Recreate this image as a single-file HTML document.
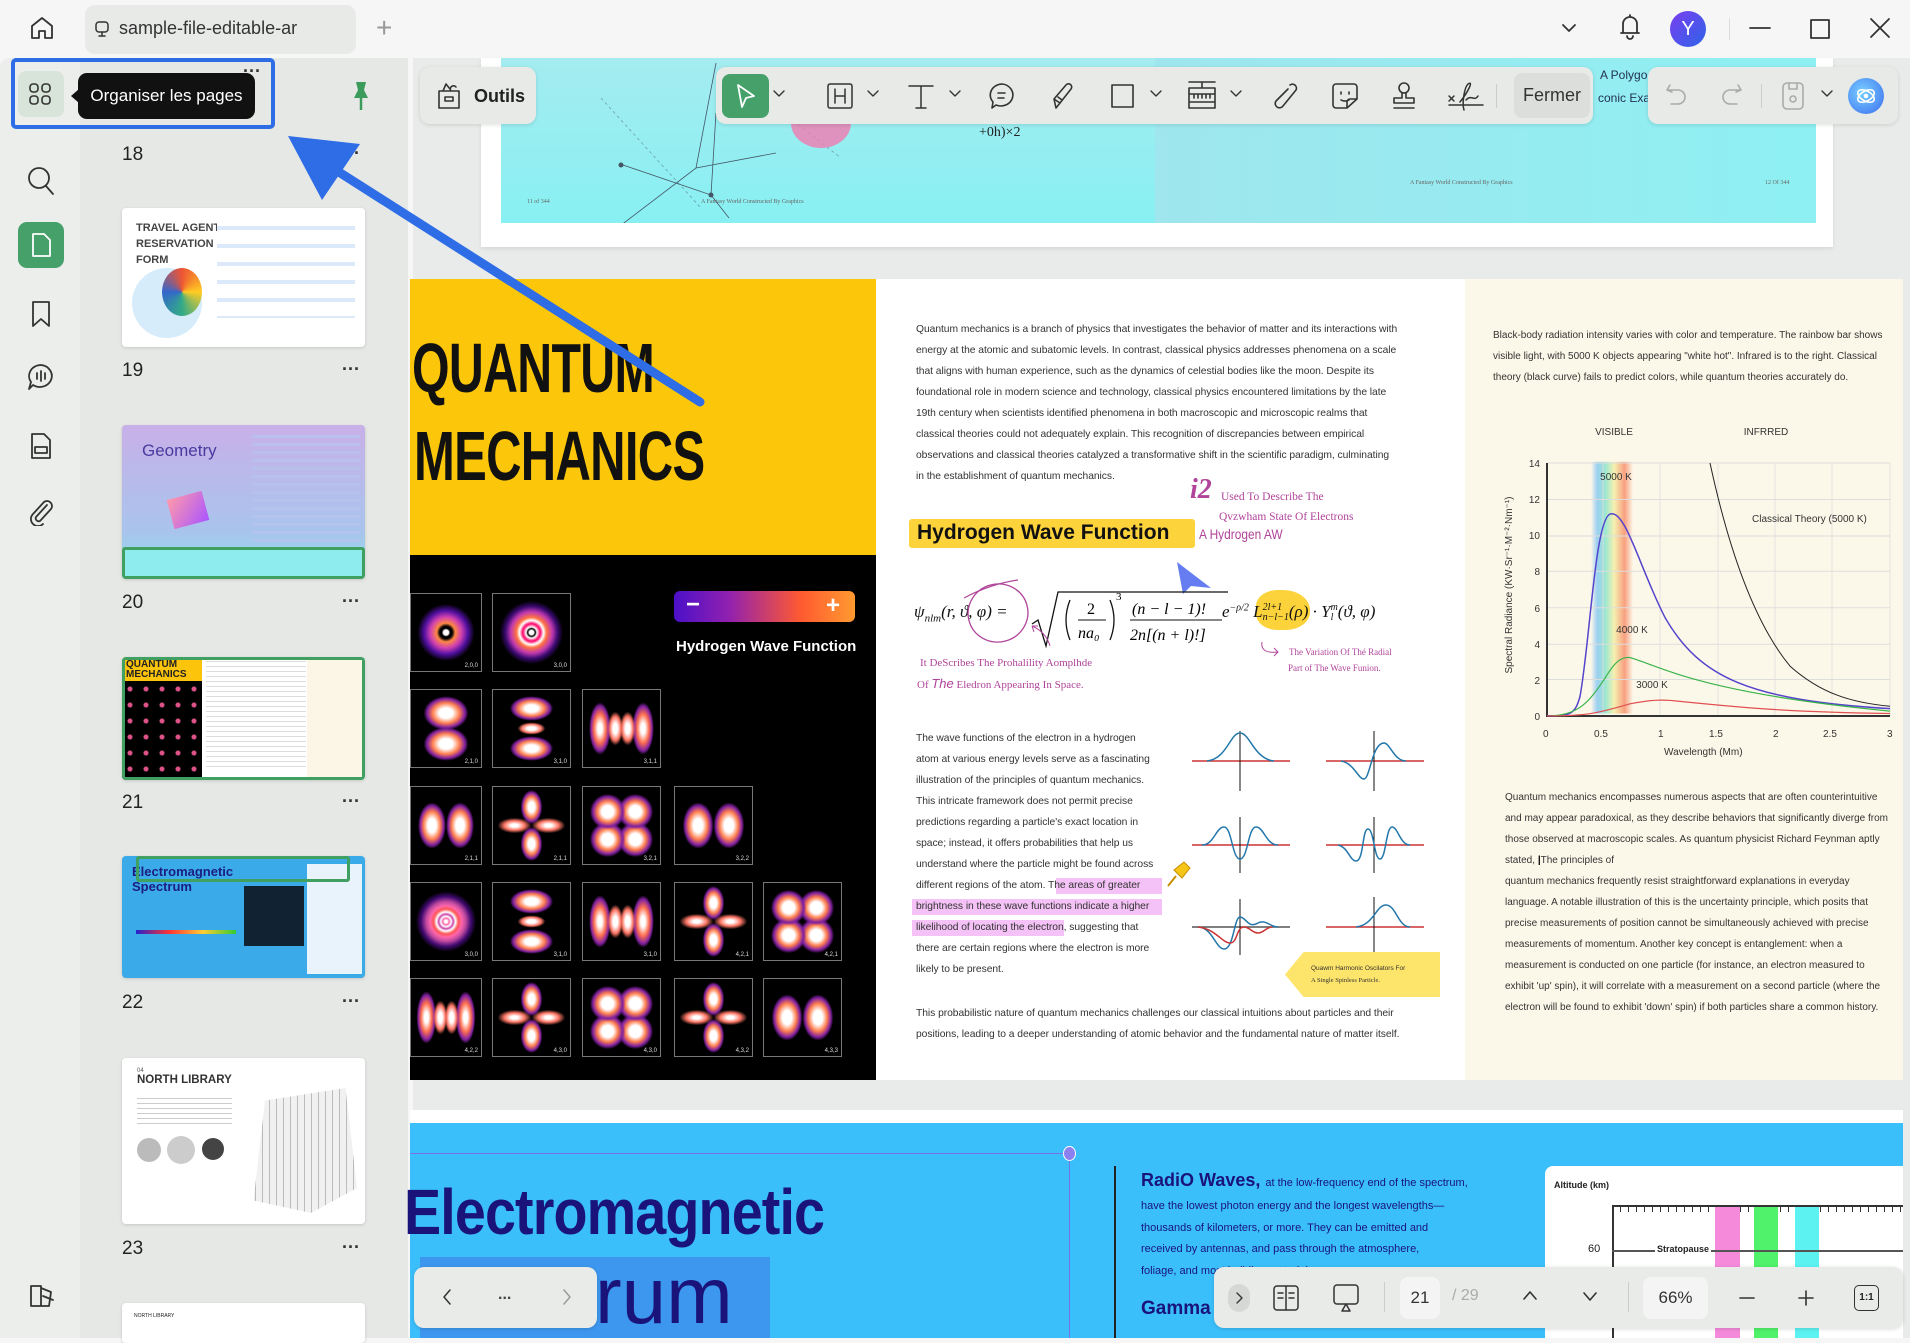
<!DOCTYPE html>
<html><head><meta charset="utf-8"><style>
*{margin:0;padding:0;box-sizing:border-box}
body{width:1910px;height:1338px;overflow:hidden;background:#f5f6f5;font-family:"Liberation Sans",sans-serif;position:relative;color:#222}
.a{position:absolute}
.ico{position:absolute;stroke:#333;fill:none;stroke-width:1.8;stroke-linecap:round;stroke-linejoin:round}
.tl{position:absolute;font-size:10.3px;color:#333;white-space:nowrap;letter-spacing:-0.05px}
.rt{position:absolute;font-size:10px;color:#333;white-space:nowrap}
.cell{position:absolute;width:79px;height:79px;border:1px solid #777;background:#000;overflow:hidden}
.cell i{position:absolute;right:3px;bottom:2px;font-size:6px;color:#ddd;font-style:normal}
.dots{position:absolute;font-size:18px;color:#333;letter-spacing:1px;font-weight:bold}
.num{position:absolute;font-size:19px;color:#222}
.th{position:absolute;left:122px;width:243px;border-radius:4px;overflow:hidden;box-shadow:0 1px 3px rgba(0,0,0,.15)}
</style></head><body>

<!-- top bar -->
<svg class="ico" style="left:28px;top:14px" width="28" height="28" viewBox="0 0 28 28"><path d="M4 12 L14 4 L24 12 V24 H17 V17 H11 V24 H4 Z"/></svg>
<div class="a" style="left:85px;top:5px;width:271px;height:49px;background:#e8eae8;border-radius:10px"></div>
<svg class="ico" style="left:93px;top:20px;stroke-width:1.5" width="18" height="20" viewBox="0 0 18 20"><rect x="3" y="2" width="12" height="10" rx="3"/><path d="M9 12 V16 M6 16 H12"/></svg>
<div class="a" style="left:119px;top:18px;font-size:18px;color:#333">sample-file-editable-ar</div>
<div class="a" style="left:376px;top:12px;font-size:28px;color:#999;font-weight:300">+</div>
<svg class="ico" style="left:1560px;top:20px" width="18" height="16"><path d="M3 5 L9 11 L15 5"/></svg>
<svg class="ico" style="left:1617px;top:12px" width="26" height="30" viewBox="0 0 26 30"><path d="M6 21 V12 a7 7 0 0 1 14 0 V21 H4 H22 M13 3 V5 M10 24 a3 3 0 0 0 6 0"/></svg>
<div class="a" style="left:1670px;top:11px;width:36px;height:36px;border-radius:50%;background:linear-gradient(135deg,#7a3ef0,#2d64e8);color:#fff;font-size:20px;text-align:center;line-height:36px">Y</div>
<div class="a" style="left:1729px;top:18px;width:1px;height:22px;background:#ddd"></div>
<svg class="ico" style="left:1748px;top:18px" width="24" height="20"><path d="M2 10 H22"/></svg>
<svg class="ico" style="left:1808px;top:18px" width="24" height="22"><rect x="3" y="2" width="18" height="18"/></svg>
<svg class="ico" style="left:1868px;top:16px" width="24" height="24"><path d="M3 3 L21 21 M21 3 L3 21"/></svg>

<!-- left icon rail -->
<div class="a" style="left:0;top:58px;width:408px;height:1280px;background:#eceeec;border-radius:10px 10px 0 0"></div>
<div class="a" style="left:80px;top:58px;width:328px;height:1280px;background:#e6e8e6"></div>
<div class="a" style="left:18px;top:71px;width:46px;height:46px;background:#d8e4da;border-radius:8px"></div>
<svg class="ico" style="left:27px;top:81px;stroke-width:1.6" width="28" height="28"><rect x="3" y="3" width="8" height="8" rx="3"/><rect x="15" y="3" width="8" height="8" rx="3"/><rect x="3" y="15" width="8" height="8" rx="3"/><rect x="15" y="15" width="8" height="8" rx="3"/></svg>
<div class="a" style="left:11px;top:58px;width:264px;height:71px;border:4px solid #2f6de6;border-radius:5px"></div>
<div class="a" style="left:78px;top:73px;width:177px;height:46px;background:#111;border-radius:9px;color:#fff;font-size:17px;line-height:46px;text-align:center">Organiser les pages</div>
<div class="a" style="left:71px;top:89px;width:0;height:0;border-top:7px solid transparent;border-bottom:7px solid transparent;border-right:8px solid #111"></div>
<svg class="a" style="left:350px;top:80px" width="22" height="32"><path d="M6 2 H16 L14 10 L18 18 H4 L8 10 Z" fill="#3a9b5a"/><path d="M11 18 V30" stroke="#3a9b5a" stroke-width="2.5"/></svg>
<svg class="ico" style="left:26px;top:165px" width="30" height="32"><circle cx="13" cy="13" r="10"/><path d="M20 21 L27 29"/></svg>
<div class="a" style="left:18px;top:222px;width:46px;height:46px;background:#45a06a;border-radius:9px"></div>
<svg class="ico" style="left:29px;top:231px;stroke:#fff" width="24" height="28"><path d="M4 3 H15 L21 9 V25 H4 Z"/></svg>
<svg class="ico" style="left:29px;top:299px" width="24" height="30"><path d="M4 3 H20 V27 L12 20 L4 27 Z"/></svg>
<svg class="ico" style="left:25px;top:362px" width="32" height="30"><path d="M16 3 a12 11 0 1 1 -8 20 L4 27 L6 20 A12 11 0 0 1 16 3Z M12 11 V17 M16 9 V19 M20 11 V17"/></svg>
<svg class="ico" style="left:28px;top:431px" width="26" height="30"><path d="M4 3 H16 L22 9 V27 H4 Z M7 16 H19 V22 H7 Z"/></svg>
<svg class="ico" style="left:27px;top:496px" width="28" height="30"><path d="M20 9 L9 21 a3 3 0 0 0 4 4 L24 13 a5 5 0 0 0 -7 -7 L6 18 a7 7 0 0 0 10 10"/></svg>
<svg class="ico" style="left:27px;top:1282px" width="30" height="28"><path d="M4 4 H14 V24 H4 Z M14 6 L24 10 L22 24 L14 24 M16 14 L26 18"/></svg>

<!-- thumbnails -->
<div class="dots" style="left:243px;top:56px">...</div>
<div class="num" style="left:122px;top:144px">18</div><div class="dots" style="left:342px;top:138px">...</div>
<div class="th" style="top:208px;height:139px;background:#fff">
 <div class="a" style="left:14px;top:12px;font-size:11px;color:#444;font-weight:bold;line-height:16px">TRAVEL AGENT<br>RESERVATION<br>FORM</div>
 <div class="a" style="left:95px;top:10px;width:138px;height:100px;background:repeating-linear-gradient(#fff 0 8px,#dbe9fb 8px 12px,#fff 12px 18px)"></div>
 <div class="a" style="left:10px;top:60px;width:70px;height:70px;border-radius:50%;background:#d6ecfb"></div>
 <div class="a" style="left:40px;top:60px;width:40px;height:48px;border-radius:50%;background:conic-gradient(#e53,#fc2,#3a8,#36c,#e53)"></div>
</div>
<div class="num" style="left:122px;top:360px">19</div><div class="dots" style="left:342px;top:354px">...</div>
<div class="th" style="top:425px;height:154px;background:linear-gradient(#c8b0e8,#a8c4ec 70%,#8ee6ee)">
 <div class="a" style="left:20px;top:16px;font-size:17px;color:#4a3aa0">Geometry</div>
 <div class="a" style="left:48px;top:70px;width:36px;height:30px;background:linear-gradient(135deg,#f9a,#a5f);transform:rotate(-15deg)"></div>
 <div class="a" style="left:130px;top:10px;width:108px;height:110px;background:repeating-linear-gradient(#b7c5ec 0 3px,transparent 3px 8px);opacity:.7"></div>
 <div class="a" style="left:0;top:122px;width:243px;height:32px;border:3px solid #3fa062;border-radius:3px;background:#8eecef"></div>
</div>
<div class="num" style="left:122px;top:592px">20</div><div class="dots" style="left:342px;top:586px">...</div>
<div class="th" style="top:657px;height:123px;background:#fff">
 <div class="a" style="left:0;top:0;width:80px;height:24px;background:#fcc40a;font-size:10px;font-weight:bold;padding:3px 4px;line-height:10px">QUANTUM<br>MECHANICS</div>
 <div class="a" style="left:0;top:24px;width:80px;height:99px;background:#000 radial-gradient(circle,#d58 0 2px,transparent 3px) 0 0/16px 16px"></div>
 <div class="a" style="left:84px;top:4px;width:100px;height:110px;background:repeating-linear-gradient(#ddd 0 1px,transparent 1px 5px)"></div>
 <div class="a" style="left:185px;top:0;width:58px;height:123px;background:#fbf6e6"></div>
 <div class="a" style="left:0;top:0;width:243px;height:123px;border:3px solid #3fa062;border-radius:3px"></div>
</div>
<div class="num" style="left:122px;top:792px">21</div><div class="dots" style="left:342px;top:786px">...</div>
<div class="th" style="top:856px;height:122px;background:#3aaae8">
 <div class="a" style="left:10px;top:8px;font-size:13px;font-weight:bold;color:#1b1d80">Electromagnetic<br>Spectrum</div>
 <div class="a" style="left:122px;top:30px;width:60px;height:60px;background:#123"></div>
 <div class="a" style="left:185px;top:8px;width:55px;height:110px;background:#e8f3fb"></div>
 <div class="a" style="left:14px;top:74px;width:100px;height:4px;background:linear-gradient(90deg,#22c,#f33,#fc3,#3c3)"></div>
 <div class="a" style="left:14px;top:0;width:214px;height:26px;border:3px solid #3fa062;border-radius:3px"></div>
</div>
<div class="num" style="left:122px;top:992px">22</div><div class="dots" style="left:342px;top:986px">...</div>
<div class="th" style="top:1058px;height:166px;background:#fff">
 <div class="a" style="left:15px;top:10px;font-size:6px;color:#555">04</div>
 <div class="a" style="left:15px;top:16px;font-size:11.5px;font-weight:bold;color:#333">NORTH LIBRARY</div>
 <div class="a" style="left:15px;top:40px;width:95px;height:30px;background:repeating-linear-gradient(#ccc 0 1px,transparent 1px 5px)"></div>
 <div class="a" style="left:15px;top:80px;width:24px;height:24px;border-radius:50%;background:#bbb"></div>
 <div class="a" style="left:45px;top:78px;width:28px;height:28px;border-radius:50%;background:#ccc"></div>
 <div class="a" style="left:80px;top:80px;width:22px;height:22px;border-radius:50%;background:#444"></div>
 <div class="a" style="left:120px;top:30px;width:115px;height:125px;background:repeating-linear-gradient(90deg,#eee 0 6px,#aaa 6px 7px),#eee;clip-path:polygon(20% 10%,90% 0,100% 80%,60% 100%,10% 90%);opacity:.8"></div>
</div>
<div class="num" style="left:122px;top:1238px">23</div><div class="dots" style="left:342px;top:1232px">...</div>
<div class="th" style="top:1303px;height:40px;background:#fff"><div class="a" style="left:12px;top:10px;font-size:5px">NORTH LIBRARY</div></div>

<!-- main area -->
<div class="a" style="left:413px;top:58px;width:1497px;height:1280px;background:#e9ebea"></div>
<!-- top cyan page -->
<div class="a" style="left:481px;top:58px;width:1352px;height:189px;background:#fff;box-shadow:0 2px 4px rgba(0,0,0,.08)"></div>
<div class="a" style="left:501px;top:58px;width:654px;height:165px;background:linear-gradient(#a4ecf0,#88f0f2)"></div>
<div class="a" style="left:1155px;top:58px;width:661px;height:165px;background:linear-gradient(90deg,#9fe6ee,#8ef0f2)"></div>
<svg class="a" style="left:501px;top:58px" width="654" height="165"><g stroke="#456" stroke-width="0.8" fill="none"><path d="M90 190 L195 110 L275 95 M122 107 L210 137 L215 55 M195 110 L215 5 M210 137 L228 160"/><path d="M100 40 L200 150 M250 30 L340 100" stroke-dasharray="3 3" opacity=".5"/></g><circle cx="120" cy="107" r="2.5" fill="#456"/><circle cx="210" cy="137" r="2.5" fill="#456"/><path d="M290 65 a30 25 0 0 0 60 0" fill="#f07ab0" opacity=".8"/><text x="478" y="78" font-family="Liberation Serif" font-size="14" fill="#222">+0h)×2</text><text x="200" y="145" font-family="Liberation Serif" font-size="6" fill="#666">A Fantasy World Constructed By Graphics</text><text x="26" y="145" font-family="Liberation Serif" font-size="6" fill="#666">11 of 344</text></svg>
<div class="a" style="left:1410px;top:180px;font-family:'Liberation Serif';font-size:6px;color:#666">A Fantasy World Constructed By Graphics</div>
<div class="a" style="left:1765px;top:180px;font-family:'Liberation Serif';font-size:6px;color:#666">12 Of 344</div>
<div class="a" style="left:1600px;top:68px;font-size:12px;color:#235">A Polygo</div>
<div class="a" style="left:1598px;top:91px;font-size:12px;color:#235">conic Exa</div>

<!-- toolbars -->
<div class="a" style="left:420px;top:67px;width:116px;height:57px;background:#e8eae8;border-radius:10px;box-shadow:0 1px 4px rgba(0,0,0,.12)"></div>
<svg class="ico" style="left:434px;top:78px;stroke-width:1.6" width="30" height="34"><path d="M5 13 H25 V30 H5 Z M11 19 H19 V23 H11 Z M9 13 L12 6 L16 11 M17 13 a3 3 0 1 1 5 -4"/></svg>
<div class="a" style="left:474px;top:86px;font-size:18px;font-weight:bold;color:#222">Outils</div>
<div class="a" style="left:716px;top:67px;width:877px;height:57px;background:#e8eae8;border-radius:10px;box-shadow:0 1px 4px rgba(0,0,0,.12)"></div>
<div class="a" style="left:722px;top:74px;width:47px;height:44px;background:#45a06a;border-radius:8px"></div>
<svg class="ico" style="left:733px;top:82px;stroke:#fff" width="26" height="28"><path d="M5 3 L21 14 L13 16 L9 25 Z"/></svg>
<svg class="ico" style="left:772px;top:89px;stroke-width:1.4" width="14" height="10"><path d="M2 2 L7 7 L12 2"/></svg>
<svg class="ico" style="left:826px;top:82px;stroke-width:1.5" width="28" height="28"><rect x="2" y="2" width="24" height="24" rx="2"/><path d="M9 7 V21 M19 7 V21 M9 14 H19"/></svg>
<svg class="ico" style="left:866px;top:89px;stroke-width:1.4" width="14" height="10"><path d="M2 2 L7 7 L12 2"/></svg>
<svg class="ico" style="left:906px;top:82px;stroke-width:1.5" width="30" height="28"><path d="M3 4 H27 M15 4 V26 M10 26 H20"/></svg>
<svg class="ico" style="left:948px;top:89px;stroke-width:1.4" width="14" height="10"><path d="M2 2 L7 7 L12 2"/></svg>
<svg class="ico" style="left:987px;top:81px;stroke-width:1.6" width="30" height="30"><path d="M15 3 a12 11 0 1 1 -6 21 L5 27 L6 21 A12 11 0 0 1 15 3Z M11 12 H18 M11 17 H17"/></svg>
<svg class="ico" style="left:1048px;top:81px;stroke-width:1.6" width="30" height="30"><path d="M8 27 L6 18 L18 4 a3 3 0 0 1 5 4 L12 22 Z M6 18 L12 22 M10 16 L14 19"/></svg>
<svg class="ico" style="left:1110px;top:82px;stroke-width:1.6" width="26" height="28"><rect x="2" y="3" width="21" height="22"/></svg>
<svg class="ico" style="left:1149px;top:89px;stroke-width:1.4" width="14" height="10"><path d="M2 2 L7 7 L12 2"/></svg>
<svg class="ico" style="left:1186px;top:79px;stroke-width:1.6" width="32" height="34"><path d="M3 3 H29 M16 3 V9 M3 9 H29 V29 H3 Z M3 15 H29 M3 23 H29 M8 15 V19 M12 15 V19 M16 15 V19 M20 15 V19 M24 15 V19"/></svg>
<svg class="ico" style="left:1229px;top:89px;stroke-width:1.4" width="14" height="10"><path d="M2 2 L7 7 L12 2"/></svg>
<svg class="ico" style="left:1270px;top:81px;stroke-width:1.6" width="30" height="30"><path d="M20 4 a4 4 0 0 1 6 5 L13 25 a4 4 0 0 1 -7 -5 L18 8"/></svg>
<svg class="ico" style="left:1330px;top:81px;stroke-width:1.6" width="30" height="30"><path d="M6 3 H24 a3 3 0 0 1 3 3 V18 L17 27 H6 a3 3 0 0 1 -3 -3 V6 a3 3 0 0 1 3 -3 Z M11 11 V13 M19 11 V13 M11 19 a6 4 0 0 0 8 0 M27 18 H20 a3 3 0 0 0 -3 3 V27"/></svg>
<svg class="ico" style="left:1389px;top:80px;stroke-width:1.6" width="30" height="32"><circle cx="15" cy="8" r="5"/><path d="M13 13 V18 H5 V23 H25 V18 H17 V13 M5 28 H25"/></svg>
<svg class="ico" style="left:1446px;top:80px;stroke-width:1.5" width="40" height="32"><path d="M3 16 L8 21 M8 16 L3 21 M3 25 H37 M14 22 C22 12 28 0 22 4 C18 8 16 24 18 30 M20 20 C26 14 28 22 32 16"/></svg>
<div class="a" style="left:1496px;top:84px;width:1px;height:24px;background:#ccc"></div>
<div class="a" style="left:1514px;top:73px;width:76px;height:45px;background:#dcdedc;border-radius:8px;font-size:18px;color:#333;text-align:center;line-height:45px">Fermer</div>
<div class="a" style="left:1648px;top:67px;width:250px;height:57px;background:#e8eae8;border-radius:10px;box-shadow:0 1px 4px rgba(0,0,0,.12)"></div>
<svg class="ico" style="left:1664px;top:82px;stroke:#aaa;stroke-width:1.6" width="26" height="26"><path d="M6 3 L3 8 L8 10 M3 8 H14 a7 7 0 0 1 0 14 H7"/></svg>
<svg class="ico" style="left:1718px;top:82px;stroke:#aaa;stroke-width:1.6" width="26" height="26"><path d="M20 3 L23 8 L18 10 M23 8 H12 a7 7 0 0 0 0 14 H19"/></svg>
<div class="a" style="left:1761px;top:84px;width:1px;height:24px;background:#ccc"></div>
<svg class="ico" style="left:1780px;top:80px;stroke:#aaa;stroke-width:1.6" width="26" height="32"><rect x="3" y="3" width="20" height="26" rx="4"/><path d="M9 3 V9 H17 V3"/><circle cx="13" cy="19" r="3"/></svg>
<svg class="ico" style="left:1820px;top:89px;stroke-width:1.4" width="14" height="10"><path d="M2 2 L7 7 L12 2"/></svg>
<div class="a" style="left:1848px;top:78px;width:36px;height:36px;border-radius:50%;background:radial-gradient(circle at 40% 40%,#7ad0ff,#3a6cf0)"></div>
<svg class="ico" style="left:1854px;top:84px;stroke:#fff;stroke-width:1.6" width="24" height="24"><ellipse cx="12" cy="12" rx="9" ry="5" transform="rotate(-30 12 12)"/><ellipse cx="12" cy="12" rx="9" ry="5" transform="rotate(30 12 12)"/><circle cx="12" cy="12" r="1.5" fill="#fff"/></svg>

<!-- page 21 left yellow/black -->
<div class="a" style="left:410px;top:279px;width:466px;height:276px;background:#fcc70a;overflow:hidden">
 <div class="a" style="left:2px;top:54px;font-size:70px;font-weight:bold;color:#111;transform:scaleX(.69);transform-origin:left;letter-spacing:-1px;line-height:1">QUANTUM</div>
 <div class="a" style="left:4px;top:142px;font-size:70px;font-weight:bold;color:#111;transform:scaleX(.7);transform-origin:left;letter-spacing:-1px;line-height:1">MECHANICS</div>
</div>
<div class="a" style="left:410px;top:555px;width:466px;height:525px;background:#000"></div>
<div class="a" style="left:674px;top:591px;width:181px;height:31px;border-radius:6px;background:linear-gradient(90deg,#4b10c8,#9020b0 30%,#ff5a30 70%,#ff9a30)"></div>
<div class="a" style="left:686px;top:596px;color:#fff;font-size:24px;font-weight:bold;line-height:18px">−</div>
<div class="a" style="left:826px;top:596px;color:#fff;font-size:24px;font-weight:bold;line-height:20px">+</div>
<div class="a" style="left:676px;top:638px;color:#fff;font-size:15px;font-weight:bold">Hydrogen Wave Function</div>

<style>
.s1{background:radial-gradient(circle,#fff 0 5%,#000 8% 12%,#ff8844 18%,#d040b0 30%,#5010a0 42%,#000 55%)}
.s2{background:radial-gradient(circle,#fff 0 4%,#000 7%,#fff 10%,#f06 16%,#fff 22%,#ff7040 28%,#c03ab0 38%,#3a0a70 48%,#000 58%)}
.s3{background:radial-gradient(circle,#fff 0 3%,#f6a 6%,#fff 10%,#c4a 14%,#fff 18%,#f55 24%,#f6a 30%,#c04aa0 38%,#400a70 48%,#000 58%)}
.pz{background:radial-gradient(ellipse 32% 22% at 50% 30%,#fff 30%,#ff8050 60%,#8020a0 85%,transparent),radial-gradient(ellipse 32% 22% at 50% 70%,#fff 30%,#ff8050 60%,#8020a0 85%,transparent),#000}
.px{background:radial-gradient(ellipse 20% 30% at 30% 50%,#fff 30%,#ff8050 60%,#8020a0 85%,transparent),radial-gradient(ellipse 20% 30% at 70% 50%,#fff 30%,#ff8050 60%,#8020a0 85%,transparent),#000}
.d4{background:radial-gradient(circle at 32% 32%,#fff 0 8%,#ff8050 14%,#8020a0 20%,transparent 24%),radial-gradient(circle at 68% 32%,#fff 0 8%,#ff8050 14%,#8020a0 20%,transparent 24%),radial-gradient(circle at 32% 68%,#fff 0 8%,#ff8050 14%,#8020a0 20%,transparent 24%),radial-gradient(circle at 68% 68%,#fff 0 8%,#ff8050 14%,#8020a0 20%,transparent 24%),#000}
.dx{background:radial-gradient(ellipse 14% 22% at 50% 26%,#fff 30%,#ff8050 60%,#8020a0 85%,transparent),radial-gradient(ellipse 14% 22% at 50% 74%,#fff 30%,#ff8050 60%,#8020a0 85%,transparent),radial-gradient(ellipse 22% 10% at 28% 50%,#fff 20%,#f76 60%,transparent),radial-gradient(ellipse 22% 10% at 72% 50%,#fff 20%,#f76 60%,transparent),#000}
.dz{background:radial-gradient(ellipse 28% 16% at 50% 24%,#fff 30%,#ff8050 60%,#8020a0 85%,transparent),radial-gradient(ellipse 28% 16% at 50% 76%,#fff 30%,#ff8050 60%,#8020a0 85%,transparent),radial-gradient(ellipse 18% 8% at 50% 50%,#fff 30%,#f76 70%,transparent),#000}
.rx{background:radial-gradient(ellipse 10% 22% at 42% 50%,#fff 30%,#f76 70%,transparent),radial-gradient(ellipse 10% 22% at 58% 50%,#fff 30%,#f76 70%,transparent),radial-gradient(ellipse 14% 34% at 22% 50%,#fff 20%,#ff7050 55%,#8020a0 85%,transparent),radial-gradient(ellipse 14% 34% at 78% 50%,#fff 20%,#ff7050 55%,#8020a0 85%,transparent),#000}
</style>
<div class="cell s1" style="left:410px;top:593px;width:72px"><i>2,0,0</i></div>
<div class="cell s2" style="left:492px;top:593px"><i>3,0,0</i></div>
<div class="cell pz" style="left:410px;top:689px;width:72px"><i>2,1,0</i></div>
<div class="cell dz" style="left:492px;top:689px"><i>3,1,0</i></div>
<div class="cell rx" style="left:582px;top:689px"><i>3,1,1</i></div>
<div class="cell px" style="left:410px;top:786px;width:72px"><i>2,1,1</i></div>
<div class="cell dx" style="left:492px;top:786px"><i>2,1,1</i></div>
<div class="cell d4" style="left:582px;top:786px"><i>3,2,1</i></div>
<div class="cell px" style="left:674px;top:786px"><i>3,2,2</i></div>
<div class="cell s3" style="left:410px;top:882px;width:72px"><i>3,0,0</i></div>
<div class="cell dz" style="left:492px;top:882px"><i>3,1,0</i></div>
<div class="cell rx" style="left:582px;top:882px"><i>3,1,0</i></div>
<div class="cell dx" style="left:674px;top:882px"><i>4,2,1</i></div>
<div class="cell d4" style="left:763px;top:882px"><i>4,2,1</i></div>
<div class="cell rx" style="left:410px;top:978px;width:72px"><i>4,2,2</i></div>
<div class="cell dx" style="left:492px;top:978px"><i>4,3,0</i></div>
<div class="cell d4" style="left:582px;top:978px"><i>4,3,0</i></div>
<div class="cell dx" style="left:674px;top:978px"><i>4,3,2</i></div>
<div class="cell px" style="left:763px;top:978px"><i>4,3,3</i></div>

<!-- middle white page -->
<div class="a" style="left:876px;top:279px;width:589px;height:801px;background:#fff"></div>
<div class="tl" style="left:916px;top:324px">Quantum mechanics is a branch of physics that investigates the behavior of matter and its interactions with</div>
<div class="tl" style="left:916px;top:345px">energy at the atomic and subatomic levels. In contrast, classical physics addresses phenomena on a scale</div>
<div class="tl" style="left:916px;top:366px">that aligns with human experience, such as the dynamics of celestial bodies like the moon. Despite its</div>
<div class="tl" style="left:916px;top:387px">foundational role in modern science and technology, classical physics encountered limitations by the late</div>
<div class="tl" style="left:916px;top:408px">19th century when scientists identified phenomena in both macroscopic and microscopic realms that</div>
<div class="tl" style="left:916px;top:429px">classical theories could not adequately explain. This recognition of discrepancies between empirical</div>
<div class="tl" style="left:916px;top:450px">observations and classical theories catalyzed a transformative shift in the scientific paradigm, culminating</div>
<div class="tl" style="left:916px;top:471px">in the establishment of quantum mechanics.</div>
<div class="a" style="left:1190px;top:474px;font-family:'Liberation Serif';font-style:italic;font-weight:bold;font-size:28px;color:#b0449a">i2</div>
<div class="a" style="left:1221px;top:491px;font-family:'Liberation Serif';font-size:11.5px;color:#b0449a">Used To Describe The</div>
<div class="a" style="left:1219px;top:511px;font-family:'Liberation Serif';font-size:11.5px;color:#b0449a">Qvzwham State Of Electrons</div>
<div class="a" style="left:909px;top:519px;width:286px;height:29px;background:#fcd33a;border-radius:3px"></div>
<div class="a" style="left:917px;top:521px;font-size:21px;font-weight:bold;color:#111">Hydrogen Wave Function</div>
<div class="a" style="left:1199px;top:526px;font-size:14px;color:#b0449a;transform:scaleX(.85);transform-origin:left">A Hydrogen AW</div>
<svg class="a" style="left:1175px;top:560px" width="40" height="36"><path d="M2 2 L36 28 L16 26 L8 34 Z" fill="#4a66ee" opacity=".85"/></svg>
<div class="a" style="left:1256px;top:590px;width:54px;height:40px;background:#fcd33a;border-radius:40% 50% 45% 40%"></div>
<div class="a" style="left:914px;top:602px;font-family:'Liberation Serif';font-style:italic;font-size:17px;color:#111;white-space:nowrap">ψ<sub style="font-size:11px">nlm</sub>(r, ϑ, φ) = </div>
<svg class="a" style="left:1030px;top:586px" width="200" height="66"><path d="M2 38 L8 34 L16 60 L28 6 H198" stroke="#111" stroke-width="1.3" fill="none"/><path d="M40 14 Q32 34 40 54 M80 14 Q88 34 80 54" stroke="#111" stroke-width="1.3" fill="none"/><line x1="48" y1="34" x2="76" y2="34" stroke="#111"/><line x1="100" y1="34" x2="192" y2="34" stroke="#111"/><text x="57" y="28" font-family="Liberation Serif" font-size="16">2</text><text x="48" y="52" font-family="Liberation Serif" font-style="italic" font-size="16">na₀</text><text x="86" y="14" font-family="Liberation Serif" font-size="11">3</text><text x="102" y="28" font-family="Liberation Serif" font-style="italic" font-size="16">(n − l − 1)!</text><text x="100" y="54" font-family="Liberation Serif" font-style="italic" font-size="16">2n[(n + l)!]</text></svg>
<div class="a" style="left:1222px;top:602px;font-family:'Liberation Serif';font-style:italic;font-size:17px;color:#111;white-space:nowrap">e<sup style="font-size:10px">−ρ/2</sup> L<span style="display:inline-block;font-size:10px;line-height:10px;vertical-align:middle">2l+1<br>n−l−1</span>(ρ) · Y<span style="display:inline-block;font-size:10px;line-height:10px;vertical-align:middle">m<br>l</span>(ϑ, φ)</div>
<svg class="a" style="left:950px;top:578px" width="120" height="75"><ellipse cx="48" cy="35" rx="30" ry="29" stroke="#b0449a" stroke-width="1.3" fill="none" transform="rotate(-15 48 35)"/><path d="M14 20 Q40 6 68 2" stroke="#b0449a" stroke-width="1.2" fill="none"/><path d="M100 68 Q96 54 82 48 M82 48 L88 48 M82 48 L84 54" stroke="#b0449a" fill="none"/></svg>
<div class="a" style="left:920px;top:657px;font-family:'Liberation Serif';font-size:11px;color:#b0449a">It DeScribes The Prohalility Aomplhde</div>
<div class="a" style="left:917px;top:676px;font-family:'Liberation Serif';font-size:11px;color:#b0449a">Of <i style="font-family:'Liberation Sans';font-size:13px">The</i> Eledron Appearing In Space.</div>
<svg class="a" style="left:1258px;top:640px" width="30" height="22"><path d="M4 2 Q2 14 20 12 M16 8 L20 12 L16 16" stroke="#b0449a" fill="none"/></svg>
<div class="a" style="left:1289px;top:647px;font-family:'Liberation Serif';font-size:9px;color:#b0449a">The Variation Of Thé Radial</div>
<div class="a" style="left:1288px;top:663px;font-family:'Liberation Serif';font-size:9px;color:#b0449a">Part of The Wave Funion.</div>

<div class="tl" style="left:916px;top:733px">The wave functions of the electron in a hydrogen</div>
<div class="tl" style="left:916px;top:754px">atom at various energy levels serve as a fascinating</div>
<div class="tl" style="left:916px;top:775px">illustration of the principles of quantum mechanics.</div>
<div class="tl" style="left:916px;top:796px">This intricate framework does not permit precise</div>
<div class="tl" style="left:916px;top:817px">predictions regarding a particle's exact location in</div>
<div class="tl" style="left:916px;top:838px">space; instead, it offers probabilities that help us</div>
<div class="tl" style="left:916px;top:859px">understand where the particle might be found across</div>
<div class="a" style="left:1056px;top:878px;width:106px;height:16px;background:#f4c2f6"></div>
<div class="a" style="left:912px;top:899px;width:250px;height:16px;background:#f4c2f6"></div>
<div class="a" style="left:912px;top:920px;width:152px;height:16px;background:#f4c2f6"></div>
<div class="tl" style="left:916px;top:880px">different regions of the atom. The areas of greater</div>
<div class="tl" style="left:916px;top:901px">brightness in these wave functions indicate a higher</div>
<div class="tl" style="left:916px;top:922px">likelihood of locating the electron, suggesting that</div>
<div class="tl" style="left:916px;top:943px">there are certain regions where the electron is more</div>
<div class="tl" style="left:916px;top:964px">likely to be present.</div>
<svg class="a" style="left:1164px;top:858px" width="30" height="32"><path d="M12 18 L4 28" stroke="#c89000" stroke-width="2"/><path d="M10 12 L20 4 L26 10 L18 20 Z" fill="#f5c518" stroke="#c89000"/></svg>
<svg class="a" style="left:1185px;top:725px" width="260" height="240"><g fill="none" stroke-width="1.5">
<g transform="translate(7,36)"><path d="M0 0 H98" stroke="#c33"/><path d="M48 -30 V30" stroke="#111" stroke-width="1"/><path d="M15 0 C35 -2 38 -28 48 -28 C58 -28 62 -2 82 0" stroke="#27a"/></g>
<g transform="translate(141,36)"><path d="M0 0 H98" stroke="#c33"/><path d="M48 -30 V30" stroke="#111" stroke-width="1"/><path d="M15 0 C28 2 32 18 38 18 C44 18 46 -18 58 -18 C64 -18 68 0 80 0" stroke="#27a"/></g>
<g transform="translate(7,120)"><path d="M0 0 H98" stroke="#c33"/><path d="M48 -28 V28" stroke="#111" stroke-width="1"/><path d="M10 0 C22 0 24 -18 32 -18 C40 -18 40 14 48 14 C56 14 56 -18 64 -18 C72 -18 74 0 86 0" stroke="#27a"/></g>
<g transform="translate(141,120)"><path d="M0 0 H98" stroke="#c33"/><path d="M48 -28 V28" stroke="#111" stroke-width="1"/><path d="M12 0 C22 2 24 16 30 16 C38 16 36 -16 42 -16 C48 -16 48 14 54 14 C60 14 60 -18 66 -18 C72 -18 74 0 84 0" stroke="#27a"/></g>
<g transform="translate(7,202)"><path d="M0 0 H98" stroke="#555"/><path d="M48 -28 V28" stroke="#111" stroke-width="1"/><path d="M6 0 C20 0 24 22 32 22 C42 22 42 -10 48 -10 C54 -10 56 2 66 -4 C74 -8 78 0 86 0" stroke="#27a"/><path d="M6 0 C24 2 30 16 38 16 C46 16 44 0 52 0 C58 0 60 6 66 6 C72 6 74 0 80 0" stroke="#c33"/></g>
<g transform="translate(141,202)"><path d="M0 0 H98" stroke="#c33"/><path d="M48 -30 V28" stroke="#111" stroke-width="1"/><path d="M30 0 C48 -2 50 -22 60 -22 C70 -22 72 0 84 0" stroke="#27a"/></g>
</g></svg>
<div class="a" style="left:1285px;top:952px;width:155px;height:45px;background:#fde46a;clip-path:polygon(12% 0,100% 0,100% 100%,12% 100%,0 50%);box-shadow:0 2px 3px rgba(0,0,0,.2)"></div>
<div class="a" style="left:1311px;top:965px;font-size:6.5px;color:#333">Quawm Harmonic Oscilators For</div>
<div class="a" style="left:1311px;top:977px;font-family:'Liberation Serif';font-size:6.5px;color:#333">A Single Spinless Particle.</div>
<div class="tl" style="left:916px;top:1008px">This probabilistic nature of quantum mechanics challenges our classical intuitions about particles and their</div>
<div class="tl" style="left:916px;top:1029px">positions, leading to a deeper understanding of atomic behavior and the fundamental nature of matter itself.</div>

<!-- right beige page -->
<div class="a" style="left:1465px;top:279px;width:438px;height:801px;background:#fcf8e9"></div>
<div class="rt" style="left:1493px;top:330px">Black-body radiation intensity varies with color and temperature. The rainbow bar shows</div>
<div class="rt" style="left:1493px;top:351px">visible light, with 5000 K objects appearing "white hot". Infrared is to the right. Classical</div>
<div class="rt" style="left:1493px;top:372px">theory (black curve) fails to predict colors, while quantum theories accurately do.</div>
<svg class="a" style="left:1490px;top:415px" width="413" height="345" font-family="Liberation Sans">
<defs><linearGradient id="rb" x1="0" x2="1"><stop offset="0" stop-color="#9ec8f0" stop-opacity="0"/><stop offset=".15" stop-color="#9ad0f0"/><stop offset=".35" stop-color="#9ee8d0"/><stop offset=".55" stop-color="#f5f0b0"/><stop offset=".8" stop-color="#f8a080"/><stop offset="1" stop-color="#f8a080" stop-opacity="0"/></linearGradient></defs>
<g transform="translate(0,7.9) scale(1,1.216)">
<rect x="101" y="32" width="42" height="207" fill="url(#rb)"/>
<g stroke="#ddd" stroke-width=".8"><path d="M57 33 H400 M57 63 H400 M57 93 H400 M57 122 H400 M57 152 H400 M57 182 H400 M57 211 H400 M113 33 V241 M170 33 V241 M228 33 V241 M285 33 V241 M342 33 V241 M400 33 V241"/></g>
<path d="M57 33 V241 H400" stroke="#333" stroke-width="2" fill="none" vector-effect="non-scaling-stroke"/>
<path d="M57 241 C80 241 85 240 90 225 C100 180 105 80 120 75 C135 70 150 120 175 160 C210 210 260 228 400 235" stroke="#5544cc" stroke-width="1.5" fill="none" vector-effect="non-scaling-stroke"/>
<path d="M57 241 C90 241 100 228 115 210 C125 196 132 192 140 193 C170 200 210 222 400 237" stroke="#3ab34a" stroke-width="1.2" fill="none" vector-effect="non-scaling-stroke"/>
<path d="M57 241 C100 241 110 238 140 231 C160 228 170 227 190 229 C250 234 300 238 400 239" stroke="#e05050" stroke-width="1.2" fill="none" vector-effect="non-scaling-stroke"/>
<path d="M220 33 C235 90 260 160 300 200 C330 222 360 230 400 233" stroke="#222" stroke-width="1" fill="none" vector-effect="non-scaling-stroke"/>
</g>
<g font-size="10" fill="#333" text-anchor="end"><text x="50" y="52">14</text><text x="50" y="88">12</text><text x="50" y="124">10</text><text x="50" y="160">8</text><text x="50" y="197">6</text><text x="50" y="233">4</text><text x="50" y="269">2</text><text x="50" y="305">0</text></g>
<text x="0" y="0" font-size="10" fill="#333" text-anchor="middle" transform="translate(22,170) rotate(-90)">Spectral Radiance (KW·Sr⁻¹·M⁻²·Nm⁻¹)</text>
<text x="124" y="20" font-size="10" fill="#333" text-anchor="middle">VISIBLE</text>
<text x="276" y="20" font-size="10" fill="#333" text-anchor="middle">INFRRED</text>
<text x="126" y="65" font-size="10" fill="#333" text-anchor="middle">5000 K</text>
<text x="142" y="218" font-size="10" fill="#333" text-anchor="middle">4000 K</text>
<text x="162" y="273" font-size="10" fill="#333" text-anchor="middle">3000 K</text>
<text x="262" y="107" font-size="10" fill="#333">Classical Theory (5000 K)</text>
</svg>
<div class="rt" style="left:1543px;top:729px">0</div><div class="rt" style="left:1594px;top:729px">0.5</div><div class="rt" style="left:1658px;top:729px">1</div><div class="rt" style="left:1709px;top:729px">1.5</div><div class="rt" style="left:1773px;top:729px">2</div><div class="rt" style="left:1823px;top:729px">2.5</div><div class="rt" style="left:1887px;top:729px">3</div>
<div class="rt" style="left:1664px;top:747px">Wavelength (Mm)</div>
<div class="rt" style="left:1505px;top:792px">Quantum mechanics encompasses numerous aspects that are often counterintuitive</div>
<div class="rt" style="left:1505px;top:813px">and may appear paradoxical, as they describe behaviors that significantly diverge from</div>
<div class="rt" style="left:1505px;top:834px">those observed at macroscopic scales. As quantum physicist Richard Feynman aptly</div>
<div class="rt" style="left:1505px;top:855px">stated, <b style="color:#000">|</b>The principles of</div>
<div class="rt" style="left:1505px;top:876px">quantum mechanics frequently resist straightforward explanations in everyday</div>
<div class="rt" style="left:1505px;top:897px">language. A notable illustration of this is the uncertainty principle, which posits that</div>
<div class="rt" style="left:1505px;top:918px">precise measurements of position cannot be simultaneously achieved with precise</div>
<div class="rt" style="left:1505px;top:939px">measurements of momentum. Another key concept is entanglement: when a</div>
<div class="rt" style="left:1505px;top:960px">measurement is conducted on one particle (for instance, an electron measured to</div>
<div class="rt" style="left:1505px;top:981px">exhibit 'up' spin), it will correlate with a measurement on a second particle (where the</div>
<div class="rt" style="left:1505px;top:1002px">electron will be found to exhibit 'down' spin) if both particles share a common history.</div>

<!-- blue arrow annotation -->
<svg class="a" style="left:270px;top:120px" width="450" height="300"><path d="M430 282 L50 40" stroke="#2f6de6" stroke-width="9" stroke-linecap="round"/><path d="M18 16 L90 24 L52 80 Z" fill="#2f6de6"/></svg>

<!-- bottom blue page -->
<div class="a" style="left:410px;top:1110px;width:1493px;height:228px;background:#fff"></div>
<div class="a" style="left:410px;top:1123px;width:1493px;height:215px;background:#3bbffb"></div>
<div class="a" style="left:410px;top:1153px;width:659px;height:1px;background:#7a70e8"></div>
<div class="a" style="left:1069px;top:1153px;width:1px;height:185px;background:#7a70e8"></div>
<div class="a" style="left:1063px;top:1146px;width:13px;height:15px;border-radius:50%;background:#8a80f0;border:1.5px solid #fff"></div>
<div class="a" style="left:420px;top:1257px;width:350px;height:81px;background:#3d97ef"></div>
<div class="a" style="left:404px;top:1180px;font-size:64px;font-weight:bold;color:#1a137a;transform:scaleX(.87);transform-origin:left;letter-spacing:-1px;line-height:1">Electromagnetic</div>
<div class="a" style="left:595px;top:1256px;font-size:80px;color:#1a137a;transform:scaleX(1);transform-origin:left;line-height:1">rum</div>
<div class="a" style="left:1114px;top:1166px;width:2px;height:172px;background:#222"></div>
<div class="a" style="left:1141px;top:1170px;font-size:18px;font-weight:bold;color:#1a137a;white-space:nowrap">RadiO Waves, <span style="font-size:11px;font-weight:normal">at the low-frequency end of the spectrum,</span></div>
<div class="a" style="left:1141px;top:1196px;font-size:11px;color:#1a137a;line-height:21.5px;white-space:nowrap">have the lowest photon energy and the longest wavelengths—<br>thousands of kilometers, or more. They can be emitted and<br>received by antennas, and pass through the atmosphere,<br>foliage, and most building materials.</div>
<div class="a" style="left:1141px;top:1298px;font-size:19px;font-weight:bold;color:#1a137a">Gamma</div>
<div class="a" style="left:1545px;top:1166px;width:358px;height:172px;background:#fff;border-radius:8px 0 0 0"></div>
<div class="a" style="left:1554px;top:1180px;font-size:9px;font-weight:bold;color:#222">Altitude (km)</div>
<div class="a" style="left:1612px;top:1205px;width:291px;height:2px;background:#333"></div>
<div class="a" style="left:1612px;top:1205px;width:291px;height:7px;background:repeating-linear-gradient(90deg,#333 0 1px,transparent 1px 8px)"></div>
<div class="a" style="left:1612px;top:1205px;width:2px;height:133px;background:#333"></div>
<div class="a" style="left:1715px;top:1207px;width:25px;height:131px;background:#f58adb"></div>
<div class="a" style="left:1754px;top:1207px;width:24px;height:131px;background:#4ff26a"></div>
<div class="a" style="left:1795px;top:1207px;width:24px;height:131px;background:#5cf2f2"></div>
<div class="a" style="left:1612px;top:1250px;width:291px;height:2px;background:#555"></div>
<div class="a" style="left:1655px;top:1244px;font-size:9px;font-weight:bold;background:#fff;color:#222;padding:0 2px">Stratopause</div>
<div class="a" style="left:1588px;top:1243px;font-size:11px;color:#222">60</div>

<!-- bottom nav left -->
<div class="a" style="left:414px;top:1267px;width:183px;height:61px;background:#e9ebe9;border-radius:10px;box-shadow:0 1px 4px rgba(0,0,0,.15)"></div>
<svg class="ico" style="left:440px;top:1287px;stroke-width:1.5" width="14" height="20"><path d="M10 3 L4 10 L10 17"/></svg>
<div class="a" style="left:498px;top:1286px;font-size:16px;font-weight:bold;color:#444">...</div>
<svg class="ico" style="left:560px;top:1287px;stroke:#999;stroke-width:1.5" width="14" height="20"><path d="M4 3 L10 10 L4 17"/></svg>
<!-- bottom toolbar -->
<div class="a" style="left:1214px;top:1267px;width:689px;height:61px;background:#e9ebe9;border-radius:10px;box-shadow:0 1px 4px rgba(0,0,0,.15)"></div>
<div class="a" style="left:1228px;top:1284px;width:22px;height:28px;border-radius:11px;background:#d6d8d6"></div>
<svg class="ico" style="left:1233px;top:1291px;stroke-width:1.4" width="12" height="14"><path d="M4 2 L9 7 L4 12"/></svg>
<svg class="ico" style="left:1271px;top:1283px;stroke-width:1.5" width="30" height="30"><rect x="3" y="3" width="24" height="24" rx="3"/><path d="M15 3 V27 M7 10 H12 M7 15 H12 M18 10 H23 M18 15 H23"/></svg>
<svg class="ico" style="left:1331px;top:1282px;stroke-width:1.5" width="30" height="32"><rect x="3" y="3" width="24" height="19" rx="3"/><path d="M15 22 L11 29 H19 Z"/></svg>
<div class="a" style="left:1384px;top:1282px;width:1px;height:30px;background:#ccc"></div>
<div class="a" style="left:1400px;top:1277px;width:40px;height:42px;background:#f3f4f3;border-radius:8px;font-size:17px;line-height:42px;text-align:center;color:#333">21</div>
<div class="a" style="left:1452px;top:1287px;font-size:16px;color:#aaa">/ 29</div>
<svg class="ico" style="left:1521px;top:1288px;stroke-width:1.6" width="18" height="14"><path d="M3 11 L9 4 L15 11"/></svg>
<svg class="ico" style="left:1581px;top:1290px;stroke-width:1.6" width="18" height="14"><path d="M3 3 L9 10 L15 3"/></svg>
<div class="a" style="left:1628px;top:1282px;width:1px;height:30px;background:#ccc"></div>
<div class="a" style="left:1643px;top:1277px;width:65px;height:42px;background:#f3f4f3;border-radius:8px;font-size:17px;line-height:42px;text-align:center;color:#333">66%</div>
<svg class="ico" style="left:1737px;top:1288px;stroke-width:1.6" width="20" height="20"><path d="M3 10 H17"/></svg>
<svg class="ico" style="left:1796px;top:1288px;stroke-width:1.6" width="20" height="20"><path d="M3 10 H17 M10 3 V17"/></svg>
<div class="a" style="left:1854px;top:1285px;width:25px;height:26px;border:1.6px solid #333;border-radius:5px;font-size:10px;text-align:center;line-height:23px;font-weight:bold">1:1</div>
</body></html>
